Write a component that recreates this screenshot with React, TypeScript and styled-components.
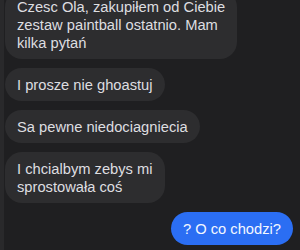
import React from "react";
import styled, { createGlobalStyle } from "styled-components";

const Global = createGlobalStyle`
  html, body { margin: 0; padding: 0; background: #1f1f21; }
  #root { width: 300px; height: 250px; }
`;

const Screen = styled.div`
  box-sizing: border-box;
  width: 300px;
  height: 250px;
  overflow: hidden;
  background: #1f1f21;
  border-left: 4px solid #29292b;
  display: flex;
  flex-direction: column;
  justify-content: flex-end;
  gap: 9px;
  padding: 0 7px 5px 1px;
  font-family: "Liberation Sans", Arial, sans-serif;
`;

const Bubble = styled.div<{ $out?: boolean }>`
  flex: none;
  align-self: ${(p) => (p.$out ? "flex-end" : "flex-start")};
  background: ${(p) => (p.$out ? "#2b6ef3" : "#2d2d2f")};
  color: ${(p) => (p.$out ? "#f4f7ff" : "#dedee0")};
  font-size: 14.7px;
  line-height: 18px;
  padding: 8px 12px 7px 12px;
  border-radius: 17px;
  white-space: nowrap;
`;

type Msg = { lines: string[]; out?: boolean };

const messages: Msg[] = [
  {
    lines: [
      "Czesc Ola, zakupiłem od Ciebie",
      "zestaw paintball ostatnio. Mam",
      "kilka pytań",
    ],
  },
  { lines: ["I prosze nie ghoastuj"] },
  { lines: ["Sa pewne niedociagniecia"] },
  { lines: ["I chcialbym zebys mi", "sprostowała coś"] },
  { lines: ["? O co chodzi?"], out: true },
];

export default function App() {
  return (
    <>
      <Global />
      <Screen>
        {messages.map((m, i) => (
          <Bubble key={i} $out={m.out}>
            {m.lines.map((l, j) => (
              <React.Fragment key={j}>
                {j > 0 && <br />}
                {l}
              </React.Fragment>
            ))}
          </Bubble>
        ))}
      </Screen>
    </>
  );
}
